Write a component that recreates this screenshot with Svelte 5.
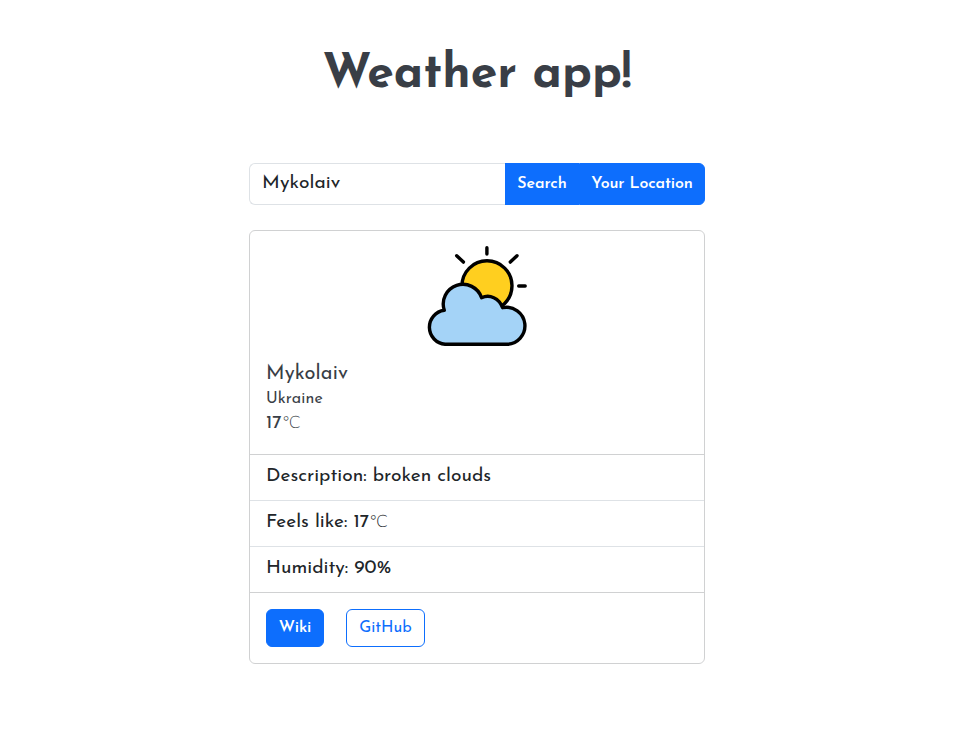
<script>
  let query = $state('Mykolaiv');
  const details = [
    { text: 'Description: broken clouds' },
    { text: 'Feels like: 17', unit: '℃' },
    { text: 'Humidity: 90%' }
  ];
</script>

<main>
  <h1>Weather app!</h1>

  <form class="search" onsubmit={(e) => e.preventDefault()}>
    <input bind:value={query} aria-label="City" />
    <button type="submit">Search</button>
    <button type="button" class="last">Your Location</button>
  </form>

  <section class="card">
    <svg viewBox="0 0 100 100" width="100" height="100" aria-hidden="true" fill="none" stroke="#000" stroke-width="3.4" stroke-linecap="round" stroke-linejoin="round">
      <circle cx="60" cy="39.8" r="25" fill="#ffcf1f" />
      <path d="M18.5 98.300a17.100 17.100 0 0 1-.8-34A19.400 19.400 0 0 1 55 51.700C63 48 72.500 52 76 61.700A18.500 18.500 0 1 1 80 98.300Z" fill="#a4d3f7" transform="translate(-.4 0)" />
      <path d="M59.900 1.700V8M29.700 9.700L36.400 16.100M90 9.700L83.300 16.100M91.700 40H98.200" />
    </svg>
    <div class="body">
      <h2>Mykolaiv</h2>
      <h3>Ukraine</h3>
      <p>17<span class="unit">℃</span></p>
    </div>
    <ul>
      {#each details as item}
        <li>{item.text}{#if item.unit}<span class="unit">{item.unit}</span>{/if}</li>
      {/each}
    </ul>
    <footer>
      <button class="wiki">Wiki</button>
      <button class="github">GitHub</button>
    </footer>
  </section>
</main>

<style>
  :global(body) {
    background: #fff;
  }
  main,
  input,
  button {
    font-family: 'Josefin Sans', Lato, 'Liberation Sans', sans-serif;
  }
  main {
    width: 456px;
    margin: 0 auto;
    padding-top: 47px;
    color: #212529;
    white-space: nowrap;
  }
  h1 {
    margin: 0;
    height: 116px;
    line-height: 56px;
    font-size: 48px;
    font-weight: 700;
    text-align: center;
    color: #393e46;
  }
  h2,
  h3,
  p {
    margin: 0;
    font-weight: 400;
    color: #393e46;
  }
  .search {
    display: flex;
    height: 42px;
  }
  input {
    flex: 1;
    min-width: 0;
    box-sizing: border-box;
    padding: 0 12px 1px;
    border: 1px solid #dee2e6;
    border-right: 0;
    border-radius: 6px 0 0 6px;
    outline: 0;
    font-size: 19.2px;
    letter-spacing: 0.12px;
    color: #212529;
    background: #fff;
  }
  button {
    box-sizing: border-box;
    display: flex;
    align-items: center;
    justify-content: center;
    padding: 0;
    border: 1px solid #0d6efd;
    background: #0d6efd;
    color: #fff;
    font-size: 16px;
    font-weight: 600;
    letter-spacing: -0.1px;
  }
  .search button {
    width: 74px;
    padding-bottom: 1px;
  }
  .search .last {
    width: 126px;
    border-radius: 0 6px 6px 0;
  }
  .card {
    box-sizing: border-box;
    height: 434px;
    margin-top: 25px;
    border: 1px solid #d0d1d2;
    border-radius: 6px;
  }
  svg {
    display: block;
    margin: 15px auto 0;
  }
  .body {
    height: 91px;
    padding: 17px 16px 0;
    font-size: 19.2px;
  }
  h2 {
    font-size: 20px;
    line-height: 23px;
    letter-spacing: 0.15px;
  }
  h3 {
    font-size: 16px;
    line-height: 27px;
    letter-spacing: 0.1px;
  }
  p {
    line-height: 22px;
  }
  .unit {
    font-family: 'DejaVu Sans Light', 'DejaVu Sans', sans-serif;
    font-size: 16.5px;
    font-weight: 200;
    line-height: 0;
  }
  ul {
    list-style: none;
    margin: 0;
    padding: 0;
    border-top: 1px solid #d0d1d2;
    border-bottom: 1px solid #d0d1d2;
  }
  li {
    box-sizing: border-box;
    height: 46px;
    padding: 0 16px;
    line-height: 43px;
    font-size: 19.2px;
    border-bottom: 1px solid #dee2e6;
  }
  li:last-child {
    height: 45px;
    border-bottom: 0;
  }
  footer {
    display: flex;
    gap: 22px;
    padding: 16px;
  }
  footer button {
    height: 38px;
    padding-bottom: 1px;
    border-radius: 6px;
  }
  .wiki {
    width: 58px;
  }
  .github {
    width: 79px;
    background: #fff;
    color: #0d6efd;
    font-weight: 400;
    letter-spacing: 0;
  }
</style>
